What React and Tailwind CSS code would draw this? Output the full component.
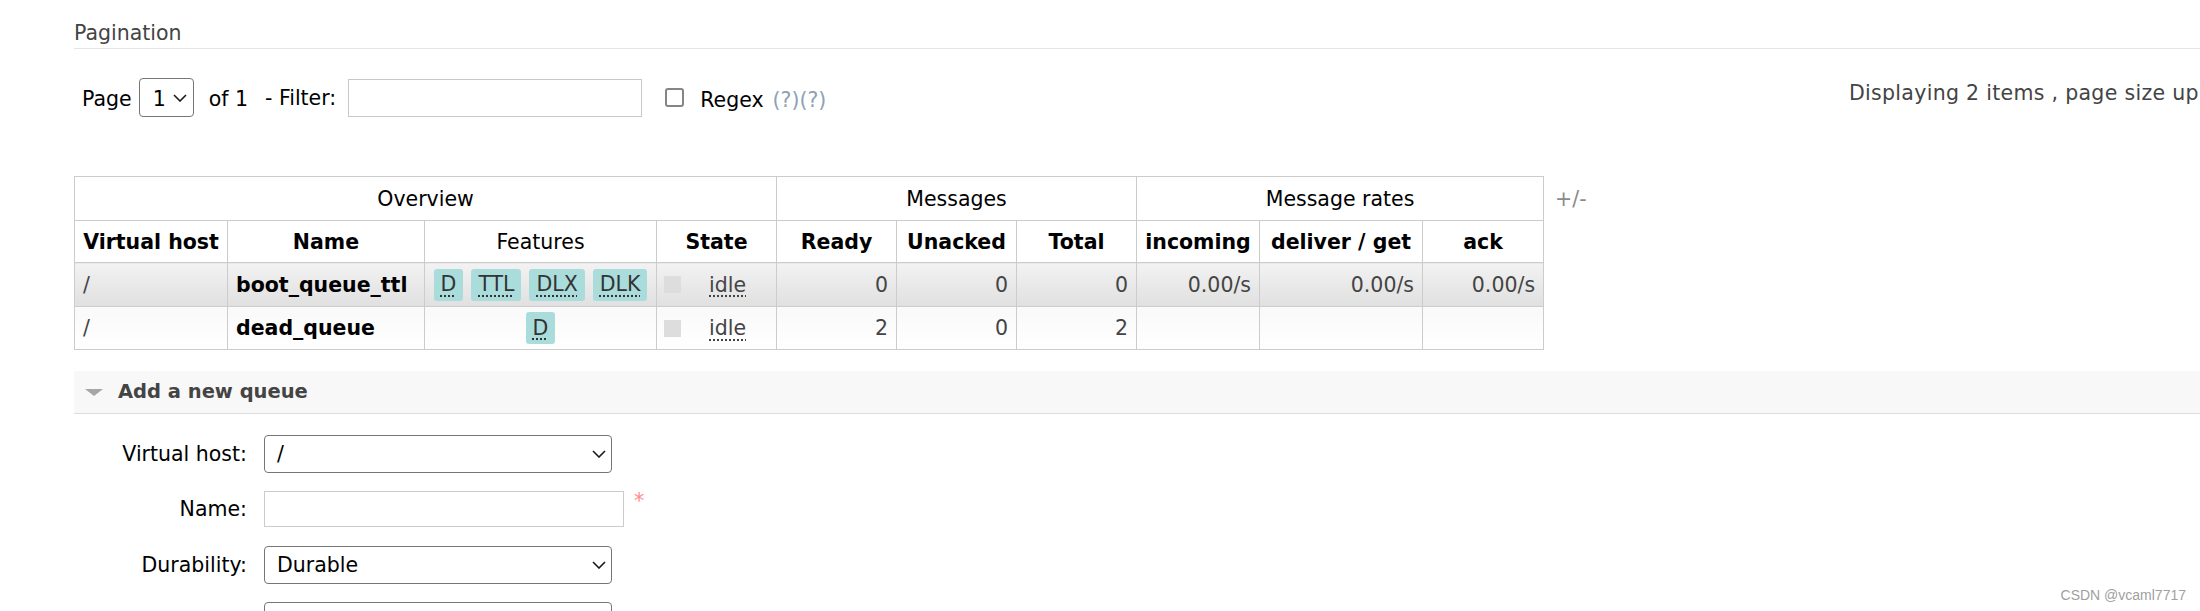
import React from "react";

function Chevron({ className = "" }) {
  return (
    <svg width="14" height="8" viewBox="0 0 14 8" className={className}>
      <polyline points="1,1 7,7 13,1" fill="none" stroke="#1a1a1a" strokeWidth="1.6" />
    </svg>
  );
}

function Badge({ children }) {
  return (
    <span className="inline-flex items-center h-[32px] px-[7px] rounded-[3px] bg-[#abdcdc] text-[#333] leading-none">
      <span className="underline decoration-dotted underline-offset-[4px]">{children}</span>
    </span>
  );
}

function FakeSelect({ value, w = "w-[348px]" }) {
  return (
    <div className={`${w} h-[38px] border border-[#767676] rounded-[4px] flex items-center justify-between pl-[12px] pr-[5px] text-black`}>
      <span>{value}</span>
      <Chevron />
    </div>
  );
}

export default function App() {
  const cellH = "px-[8px] border border-[#cccccc]";
  const row1 = "bg-gradient-to-b from-[#f2f2f2] to-[#e0e0e0]";
  const row2 = "bg-gradient-to-b from-[#f9f9f9] to-[#ffffff]";
  return (
    <div className="relative w-[2200px] h-[611px] overflow-hidden bg-white font-['DejaVu_Sans',sans-serif] text-[20.5px] text-black">
      <div className="pl-[74px]">
        {/* Pagination header */}
        <div className="pt-[21px] pb-[3px] border-b border-[#e4e4e4] text-[#444] leading-[24px]">Pagination</div>

        {/* Page row */}
        <div className="flex mt-[29px] h-[39px] items-center leading-[24px]">
          <div className="w-[1775px] shrink-0 flex items-center">
            <span className="ml-[8px] mt-[2px]">Page</span>
            <div className="ml-[7px] w-[55px] h-[39px] border border-[#767676] rounded-[4px] flex items-center pl-[13px]">
              <span className="mt-[2px]">1</span>
              <Chevron className="ml-[7px]" />
            </div>
            <span className="ml-[15px] mt-[2px]">of 1</span>
            <span className="ml-[17px]">- Filter:</span>
            <input className="ml-[12px] w-[294px] h-[38px] border border-[#c8c8c8] outline-none" />
            <div className="ml-[23px] w-[19px] h-[19px] border-2 border-[#858585] rounded-[3px]" />
            <span className="ml-[16px] mt-[5px]">Regex</span>
            <span className="ml-[9px] mt-[5px] text-[#8fa1b4]">(?)(?)</span>
          </div>
          <div className="self-start mt-[3px] whitespace-nowrap text-[#444] tracking-[0.3px]">Displaying 2 items , page size up</div>
        </div>

        {/* Table */}
        <div className="flex items-start mt-[59px]">
          <table className="table-fixed border-collapse w-[1469px] leading-[24px]">
            <colgroup>
              <col className="w-[153px]" />
              <col className="w-[197px]" />
              <col className="w-[232px]" />
              <col className="w-[120px]" />
              <col className="w-[120px]" />
              <col className="w-[120px]" />
              <col className="w-[120px]" />
              <col className="w-[123px]" />
              <col className="w-[163px]" />
              <col className="w-[121px]" />
            </colgroup>
            <thead>
              <tr className="h-[44px]">
                <th colSpan={4} className={`${cellH} font-normal text-center`}>Overview</th>
                <th colSpan={3} className={`${cellH} font-normal text-center`}>Messages</th>
                <th colSpan={3} className={`${cellH} font-normal text-center`}>Message rates</th>
              </tr>
              <tr className="h-[42px]">
                <th className={`${cellH} font-bold text-center whitespace-nowrap px-[4px]`}>Virtual host</th>
                <th className={`${cellH} font-bold text-center`}>Name</th>
                <th className={`${cellH} font-normal text-center`}>Features</th>
                <th className={`${cellH} font-bold text-center`}>State</th>
                <th className={`${cellH} font-bold text-center`}>Ready</th>
                <th className={`${cellH} font-bold text-center`}>Unacked</th>
                <th className={`${cellH} font-bold text-center`}>Total</th>
                <th className={`${cellH} font-bold text-center whitespace-nowrap px-[2px]`}>incoming</th>
                <th className={`${cellH} font-bold text-center whitespace-nowrap px-[2px]`}>deliver / get</th>
                <th className={`${cellH} font-bold text-center`}>ack</th>
              </tr>
            </thead>
            <tbody className="text-[#444]">
              <tr className="h-[44px]">
                <td className={`${cellH} ${row1}`}>/</td>
                <td className={`${cellH} ${row1} font-bold text-black whitespace-nowrap`}>boot_queue_ttl</td>
                <td className={`${cellH} ${row1} px-0`}>
                  <div className="flex justify-center gap-[8px]">
                    <Badge>D</Badge>
                    <Badge>TTL</Badge>
                    <Badge>DLX</Badge>
                    <Badge>DLK</Badge>
                  </div>
                </td>
                <td className={`${cellH} ${row1} pl-[7px]`}>
                  <div className="flex items-center">
                    <span className="w-[17px] h-[17px] bg-[#dddddd]" />
                    <span className="ml-[28px] underline decoration-dotted underline-offset-[4px]">idle</span>
                  </div>
                </td>
                <td className={`${cellH} ${row1} text-right`}>0</td>
                <td className={`${cellH} ${row1} text-right`}>0</td>
                <td className={`${cellH} ${row1} text-right`}>0</td>
                <td className={`${cellH} ${row1} text-right whitespace-nowrap`}>0.00/s</td>
                <td className={`${cellH} ${row1} text-right whitespace-nowrap`}>0.00/s</td>
                <td className={`${cellH} ${row1} text-right whitespace-nowrap`}>0.00/s</td>
              </tr>
              <tr className="h-[43px]">
                <td className={`${cellH} ${row2}`}>/</td>
                <td className={`${cellH} ${row2} font-bold text-black whitespace-nowrap`}>dead_queue</td>
                <td className={`${cellH} ${row2} px-0`}>
                  <div className="flex justify-center">
                    <Badge>D</Badge>
                  </div>
                </td>
                <td className={`${cellH} ${row2} pl-[7px]`}>
                  <div className="flex items-center">
                    <span className="w-[17px] h-[17px] bg-[#dddddd]" />
                    <span className="ml-[28px] underline decoration-dotted underline-offset-[4px]">idle</span>
                  </div>
                </td>
                <td className={`${cellH} ${row2} text-right`}>2</td>
                <td className={`${cellH} ${row2} text-right`}>0</td>
                <td className={`${cellH} ${row2} text-right`}>2</td>
                <td className={`${cellH} ${row2}`}></td>
                <td className={`${cellH} ${row2}`}></td>
                <td className={`${cellH} ${row2}`}></td>
              </tr>
            </tbody>
          </table>
          <span className="ml-[11px] mt-[11px] leading-[24px] text-[#8a8a8a]">+/-</span>
        </div>

        {/* Add a new queue */}
        <div className="mt-[21px] h-[43px] bg-[#f8f8f8] border-b border-[#dddddd] flex items-center">
          <svg width="18" height="7" viewBox="0 0 18 7" className="ml-[11px]">
            <polygon points="0,0 18,0 9,7" fill="#a6a6a6" />
          </svg>
          <span className="ml-[15px] font-bold text-[#444] text-[19.5px] leading-[24px]">Add a new queue</span>
        </div>

        <div className="mt-[21px] leading-[24px]">
          <div className="flex items-center">
            <label className="w-[173px] text-right">Virtual host:</label>
            <div className="ml-[17px]"><FakeSelect value="/" /></div>
          </div>
          <div className="flex items-center mt-[18px]">
            <label className="w-[173px] text-right">Name:</label>
            <input className="ml-[17px] w-[360px] h-[36px] border border-[#cccccc] outline-none" />
            <span className="ml-[10px] self-start -mt-[2px] text-[#ff8a8a]">*</span>
          </div>
          <div className="flex items-center mt-[19px]">
            <label className="w-[173px] text-right">Durability:</label>
            <div className="ml-[17px]"><FakeSelect value="Durable" /></div>
          </div>
          <div className="flex items-center mt-[18px]">
            <div className="w-[173px]" />
            <div className="ml-[17px] w-[348px] h-[38px] border border-[#767676] rounded-[4px]" />
          </div>
        </div>
      </div>

      <div className="absolute right-[14px] bottom-[8px] font-['Liberation_Sans',Arial,sans-serif] text-[14px] leading-[16px] text-[#a0a0a0]">
        CSDN @vcaml7717
      </div>
    </div>
  );
}
